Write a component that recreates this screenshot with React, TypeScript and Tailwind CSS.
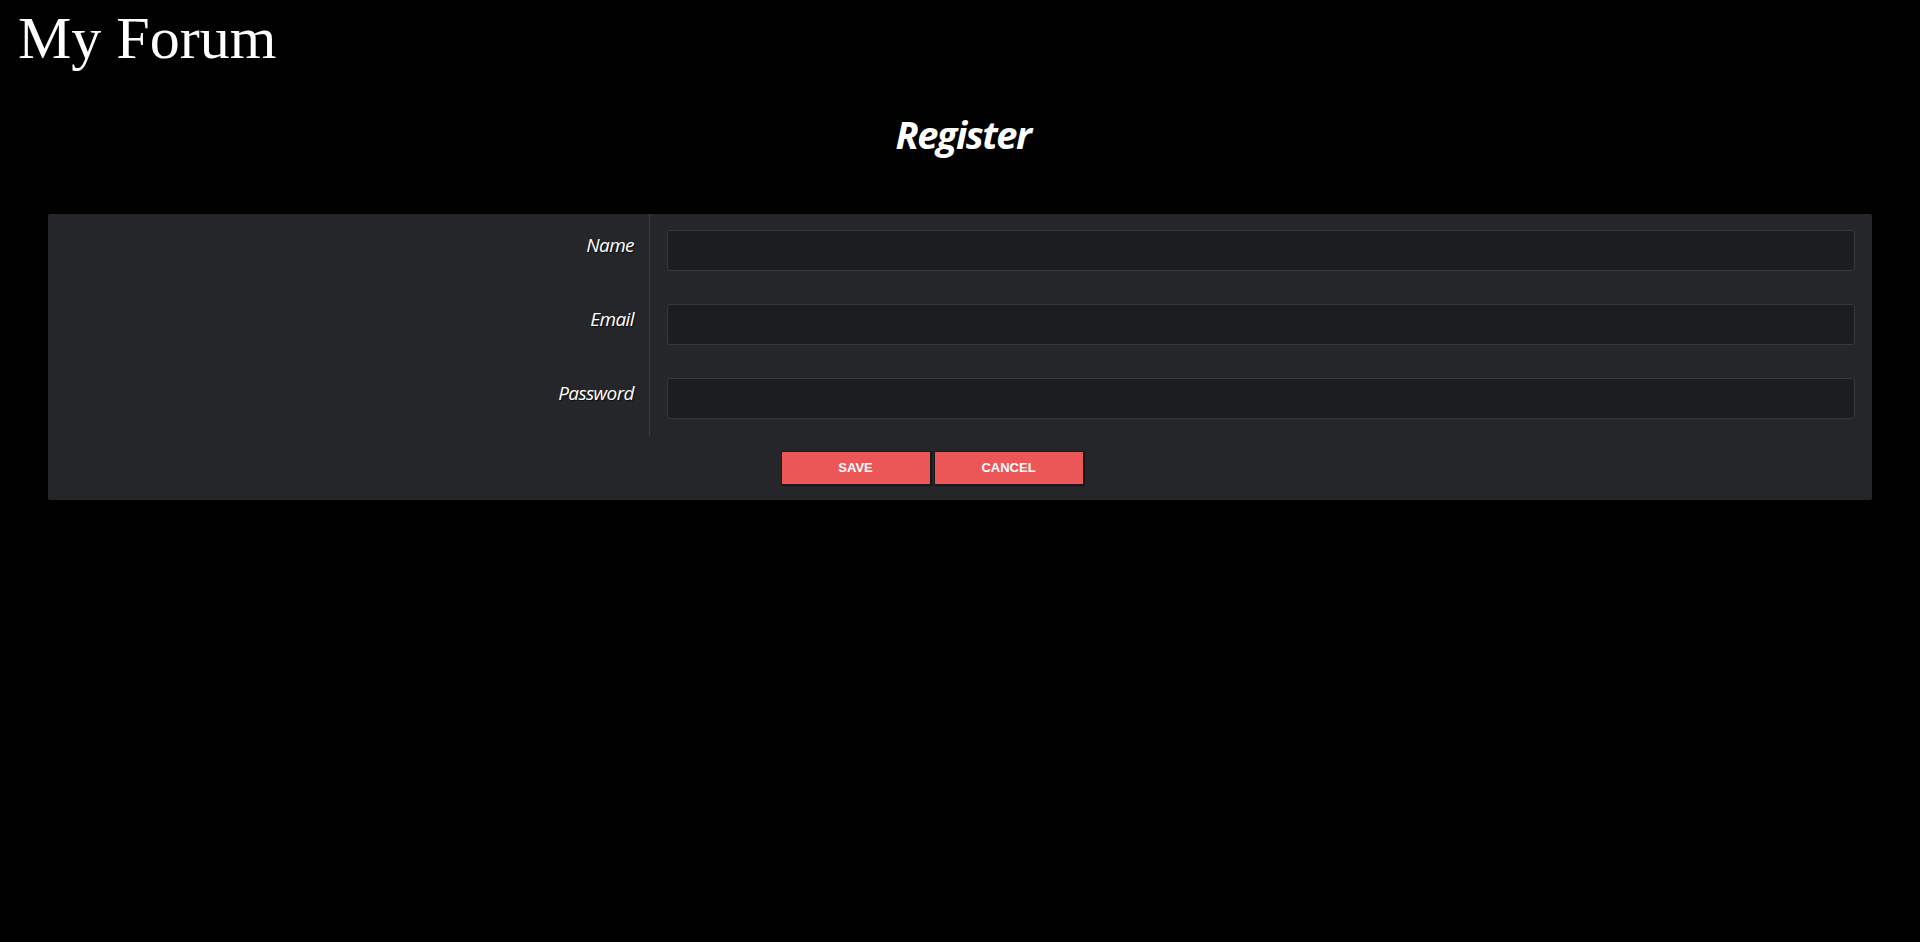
const fields = [
  { label: "Name", type: "text" },
  { label: "Email", type: "email" },
  { label: "Password", type: "password" },
];

export default function App() {
  return (
    <div className="min-h-[942px] bg-black text-white">
      <h1 className="pt-[5px] pl-[18px] text-[60px] leading-[66px] font-normal font-['Liberation_Serif',serif]">
        My Forum
      </h1>

      <h2 className="mt-[41px] text-center text-[38px] leading-[44px] font-bold italic tracking-[-1.5px] font-['Open_Sans',sans-serif] [text-shadow:1px_1px_1px_rgba(0,0,0,0.6)] pl-[6px]">
        Register
      </h2>

      {/* Formulaire */}
      <form className="mx-[48px] mt-[58px] bg-[#25262a] rounded-[2px]">
        {fields.map((f) => (
          <div key={f.label} className="flex">
            <label className="w-[602px] shrink-0 border-r border-[#3b3c41] pt-[19px] pr-[15px] text-right text-[19px] leading-[24px] italic tracking-[-0.6px] font-['Open_Sans',sans-serif] [text-shadow:1px_1px_1px_rgba(0,0,0,0.7)]">
              {f.label}
            </label>
            <div className="flex-1 px-[17px] pt-[16px] pb-[17px]">
              <input
                type={f.type}
                className="block w-full h-[41px] rounded-[3px] border border-[#37383d] bg-[#1c1d21] outline-none px-2 text-white"
              />
            </div>
          </div>
        ))}

        <div className="flex justify-center gap-[3px] pt-[15px] pb-[15px] pr-[56px]">
          <button
            type="button"
            className="w-[150px] h-[34px] border border-[#1b1b1d] bg-[#eb5757] text-white text-[13px] font-bold uppercase font-['Liberation_Sans',Arial,sans-serif] shadow-[1px_1px_1px_rgba(0,0,0,0.4)]"
          >
            Save
          </button>
          <button
            type="button"
            className="w-[150px] h-[34px] border border-[#1b1b1d] bg-[#eb5757] text-white text-[13px] font-bold uppercase font-['Liberation_Sans',Arial,sans-serif] shadow-[1px_1px_1px_rgba(0,0,0,0.4)]"
          >
            Cancel
          </button>
        </div>
      </form>
    </div>
  );
}
